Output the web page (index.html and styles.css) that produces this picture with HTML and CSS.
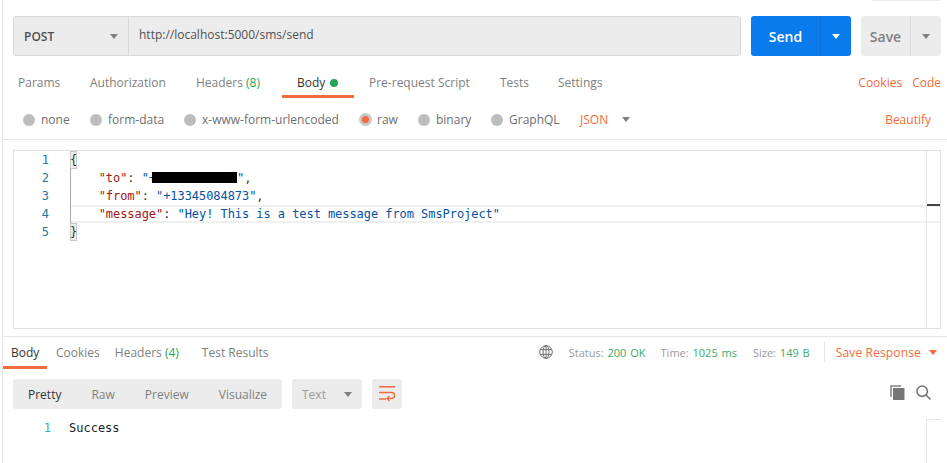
FILE: index.html
```html
<!DOCTYPE html>
<html lang="en">
<head>
<meta charset="utf-8">
<title>POST sms/send</title>
<link rel="stylesheet" href="styles.css">
</head>
<body>
<div class="app">
  <div class="corner-box"></div>
  <section class="url-row">
    <div class="url-group">
      <div class="method"><span>POST</span><i class="caret caret-grey"></i></div>
      <div class="url">http://localhost:5000/sms/send</div>
    </div>
    <div class="split send"><span class="split-main">Send</span><span class="split-side"><i class="caret caret-white"></i></span></div>
    <div class="split save"><span class="split-main">Save</span><span class="split-side"><i class="caret caret-grey"></i></span></div>
  </section>
  <nav class="req-tabs">
    <a class="tab t-params">Params</a>
    <a class="tab t-auth">Authorization</a>
    <a class="tab t-headers">Headers <em>(8)</em></a>
    <a class="tab t-body active">Body <b class="dot"></b></a>
    <a class="tab t-pre">Pre-request Script</a>
    <a class="tab t-tests">Tests</a>
    <a class="tab t-settings">Settings</a>
    <span class="spacer"></span>
    <a class="link l-cookies">Cookies</a>
    <a class="link">Code</a>
  </nav>
  <div class="body-modes">
    <span class="mode m-none"><i class="radio"></i>none</span>
    <span class="mode m-form"><i class="radio"></i>form-data</span>
    <span class="mode m-url"><i class="radio"></i>x-www-form-urlencoded</span>
    <span class="mode m-raw"><i class="radio on"></i>raw</span>
    <span class="mode m-bin"><i class="radio"></i>binary</span>
    <span class="mode m-gql"><i class="radio"></i>GraphQL</span>
    <span class="json">JSON</span><i class="caret caret-grey json-caret"></i>
    <span class="spacer"></span>
    <a class="link beautify">Beautify</a>
  </div>
  <section class="editor">
    <div class="gutter"><div>1</div><div>2</div><div>3</div><div>4</div><div>5</div></div>
    <div class="code">
      <div class="line"><span class="br">{</span></div>
      <div class="line">    <span class="k">"to"</span>: <span class="s">"+</span><span class="redact"></span><span class="s">"</span>,</div>
      <div class="line">    <span class="k">"from"</span>: <span class="s">"+13345084873"</span>,</div>
      <div class="line current">    <span class="k">"message"</span>: <span class="s">"Hey! This is a test message from SmsProject"</span></div>
      <div class="line"><span class="br">}</span></div>
      <div class="rule"></div>
    </div>
    <div class="overview"><div class="mark"></div></div>
  </section>
  <section class="response">
    <div class="res-head">
      <nav class="res-tabs">
        <a class="rtab active">Body</a>
        <a class="rtab r-cookies">Cookies</a>
        <a class="rtab r-headers">Headers <em>(4)</em></a>
        <a class="rtab">Test Results</a>
      </nav>
      <span class="spacer"></span>
      <svg class="globe" width="14" height="14" viewBox="0 0 14 14" fill="none" stroke="#707070" stroke-width="1"><circle cx="7" cy="7" r="6.3"/><ellipse cx="7" cy="7" rx="3" ry="6.3"/><path d="M1.2 4.6h11.6M1.2 9.4h11.6M7 .7v12.6"/></svg>
      <span class="stat s1">Status: <em>200 OK</em></span>
      <span class="stat s2">Time: <em>1025 ms</em></span>
      <span class="stat s3">Size: <em>149 B</em></span>
      <span class="save-res">Save Response<i class="caret caret-orange"></i></span>
    </div>
    <div class="res-tools">
      <div class="seg">
        <span class="seg-item on">Pretty</span>
        <span class="seg-item">Raw</span>
        <span class="seg-item">Preview</span>
        <span class="seg-item">Visualize</span>
      </div>
      <div class="format"><span>Text</span><i class="caret caret-grey"></i></div>
      <div class="wrap">
        <svg width="16" height="16" viewBox="0 0 16 16" fill="none" stroke="#f26b3a" stroke-width="1.5"><path d="M0 .8h16M0 6.5h12.5a3 3 0 0 1 0 6H8M0 13h7"/><path d="M10.5 10 8 12.5l2.5 2.5" stroke-width="1.3"/></svg>
      </div>
      <span class="spacer"></span>
      <svg class="copy" width="15" height="15" viewBox="0 0 15 15"><path d="M0 0h11v2H2v10H0z" fill="#a0a0a0"/><path d="M3 3h11.5v12H3z" fill="#777"/></svg>
      <svg class="search" width="15" height="15" viewBox="0 0 15 15" fill="none" stroke="#777" stroke-width="1.6"><circle cx="6.2" cy="6.2" r="5.2"/><path d="m10 10 4.4 4.4"/></svg>
    </div>
    <div class="res-code">
      <span class="rn">1</span><span class="rt">Success</span>
      <div class="res-side"></div>
    </div>
  </section>
</div>
</body>
</html>
```
FILE: styles.css
```css
* { box-sizing: border-box; }
html, body { margin: 0; padding: 0; background: #fff; }
body { width: 947px; height: 463px; overflow: hidden; font-family: "Open Sans", sans-serif; font-size: 12px; color: #808080; }
em { font-style: normal; }
.app { position: relative; height: 463px; margin-left: 2px; border-left: 1px solid #e6e6e6; }
.spacer { flex: 1; }
.corner-box { position: absolute; top: -1px; left: 869px; width: 69px; height: 2px; background: #ececec; }

.caret { display: inline-block; width: 0; height: 0; border-left: 4px solid transparent; border-right: 4px solid transparent; border-top: 5px solid #808080; }
.caret-white { border-top-color: #fff; }
.caret-orange { border-top-color: #f26b3a; }

.url-row { display: flex; height: 40px; margin-top: 16px; padding-left: 10px; position: absolute; top: 0; left: 0; right: 0; }
.url-group { display: flex; width: 728px; background: #ececec; border: 1px solid #d8d8d8; border-radius: 3px; }
.method { display: flex; align-items: center; justify-content: space-between; width: 115px; padding: 0 10px 0 10px; border-right: 1px solid #d8d8d8; font-size: 12px; font-weight: 600; color: #505050; }
.url { padding-left: 10px; font-size: 12px; line-height: 36px; color: #505050; }
.split { display: flex; height: 40px; border-radius: 3px; }
.send { margin-left: 10px; width: 100px; background: #097bed; color: #fff; }
.save { margin-left: 10px; width: 80px; background: #ececec; color: #808080; }
.split-main { display: flex; align-items: center; justify-content: center; font-size: 14px; font-weight: 600; }
.send .split-main { width: 70px; border-right: 1px solid #0a6ed2; }
.save .split-main { width: 50px; border-right: 1px solid #d8d8d8; }
.split-side { flex: 1; display: flex; align-items: center; justify-content: center; }

.req-tabs { position: absolute; top: 68px; left: 0; right: 0; height: 31px; display: flex; padding: 0 6px 0 12px; }
.tab { color: #808080; line-height: 30px; height: 31px; }
.tab em, .rtab em { color: #26a657; }
.t-params { padding-left: 3px; width: 75px; }
.t-auth { width: 106px; }
.t-headers { width: 86px; }
.t-body { width: 72px; padding-left: 15px; color: #333; border-bottom: 3px solid #f26b3a; height: 30px; margin-right: 15px; }
.t-pre { width: 131px; }
.t-tests { width: 58px; }
.dot { display: inline-block; width: 8px; height: 8px; margin-left: 2px; border-radius: 50%; background: #26a657; }
.link { color: #f26b3a; line-height: 30px; }
.l-cookies { margin-right: 10px; }

.body-modes { position: absolute; top: 100px; left: 0; right: 0; height: 40px; border-bottom: 1px solid #e6e6e6; display: flex; align-items: center; padding-left: 20px; padding-right: 16px; }
.mode { display: flex; align-items: center; height: 38px; color: #6e6e6e; }
.radio { width: 12px; height: 12px; margin-right: 6px; border-radius: 50%; background: #bdbdbd; }
.radio.on { width: 13px; height: 13px; margin-right: 5px; background: #f26b3a; border: 3px solid #c8c8c8; }
.m-none { width: 67px; }
.m-form { width: 94px; }
.m-url { width: 175px; }
.m-raw { width: 59px; }
.m-bin { width: 73px; }
.m-gql { width: 89px; }
.json { color: #f26b3a; margin-right: 14px; }
.beautify { line-height: 38px; }

.editor { position: absolute; top: 150px; left: 10px; width: 928px; height: 179px; border: 1px solid #e0e0e0; display: flex; font-family: "DejaVu Sans Mono", monospace; font-size: 12px; line-height: 18px; }
.gutter { width: 56px; padding-right: 21px; text-align: right; color: #237893; flex: none; }
.code { position: relative; flex: 1; color: #000; letter-spacing: -0.06px; }
.line { height: 18px; color: #333; white-space: pre; }
.line.current { box-shadow: inset 0 2px 0 #f0f0f0, inset 0 -2px 0 #f0f0f0; margin-right: -14px; }
.k { color: #a31515; }
.s { color: #0451a5; }
.br { display: inline-block; height: 18px; background: #efefef; outline: 1px solid #c8c8c8; outline-offset: -1px; }
.redact { display: inline-block; width: 85px; height: 11px; margin-left: -4px; background: #000; vertical-align: -1px; }
.rule { position: absolute; top: 18px; left: 0; width: 1px; height: 54px; background: #a8a8a8; }
.overview { width: 14px; flex: none; border-left: 1px solid #e6e6e6; padding-top: 53px; position: relative; }
.mark { height: 2px; background: #444; }

.response { position: absolute; top: 336px; left: 0; right: 0; bottom: 0; border-top: 1px solid #e6e6e6; }
.res-head { display: flex; align-items: center; height: 32px; padding-right: 10px; padding-bottom: 2px; }
.res-tabs { display: flex; height: 32px; align-self: flex-start; }
.rtab { margin-right: 16px; line-height: 32px; color: #808080; }
.r-cookies { margin-right: 15px; }
.r-headers { margin-right: 23px; }
.rtab.active { color: #333; padding: 0 8px; width: 44px; height: 32px; border-bottom: 3px solid #f26b3a; margin-right: 9px; }
.globe { margin-right: 16px; }
.stat { color: #999; font-size: 11px; margin-right: 15px; word-spacing: 1px; }
.s2 { margin-right: 16px; }
.s3 { margin-right: 14px; }
.stat em { color: #3da765; }
.save-res { display: flex; align-items: center; color: #f26b3a; font-size: 12px; letter-spacing: 0.15px; border-left: 1px solid #e6e6e6; padding-left: 11px; height: 20px; }
.save-res .caret { margin-left: 8px; }
.res-tools { display: flex; align-items: center; height: 30px; margin-top: 10px; padding-left: 10px; padding-right: 16px; }
.seg { display: flex; align-items: center; width: 269px; height: 30px; border-radius: 3px; background: #ececec; }
.seg-item { padding-left: 15px; padding-right: 15px; }
.seg-item.on { color: #333; }
.format { display: flex; align-items: center; justify-content: space-between; width: 70px; height: 30px; margin-left: 10px; padding: 0 10px; border-radius: 3px; background: #ececec; color: #999; }
.wrap { display: flex; align-items: center; justify-content: center; width: 30px; height: 30px; margin-left: 10px; border-radius: 3px; background: #ececec; }
.copy { margin-right: 11px; margin-bottom: 4px; }
.search { margin-bottom: 4px; }
.res-code { position: relative; display: flex; height: 54px; padding-top: 10px; font-family: "DejaVu Sans Mono", monospace; font-size: 12px; line-height: 18px; }
.rn { width: 66px; padding-right: 18px; text-align: right; color: #3ba9d0; flex: none; }
.rt { color: #222; }
.res-side { position: absolute; top: 10px; right: 6px; width: 15px; height: 44px; border-left: 1px solid #e6e6e6; border-top: 1px solid #e6e6e6; }
```
